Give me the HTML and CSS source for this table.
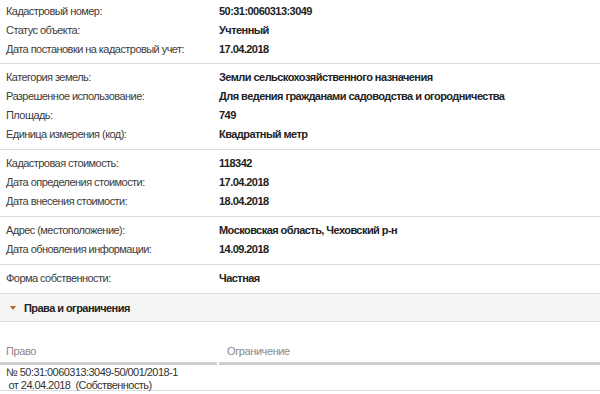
FILE: index.html
```html
<!DOCTYPE html>
<html lang="ru">
<head>
<meta charset="utf-8">
<title>Объект</title>
<link rel="stylesheet" href="styles.css">
</head>
<body>
<div class="info">
  <div class="section first">
    <div class="row"><span class="label">Кадастровый номер:</span><span class="value">50:31:0060313:3049</span></div>
    <div class="row"><span class="label">Статус объекта:</span><span class="value">Учтенный</span></div>
    <div class="row"><span class="label">Дата постановки на кадастровый учет:</span><span class="value">17.04.2018</span></div>
  </div>
  <div class="section">
    <div class="row"><span class="label">Категория земель:</span><span class="value">Земли сельскохозяйственного назначения</span></div>
    <div class="row"><span class="label">Разрешенное использование:</span><span class="value">Для ведения гражданами садоводства и огородничества</span></div>
    <div class="row"><span class="label">Площадь:</span><span class="value">749</span></div>
    <div class="row"><span class="label">Единица измерения (код):</span><span class="value">Квадратный метр</span></div>
  </div>
  <div class="section">
    <div class="row"><span class="label">Кадастровая стоимость:</span><span class="value">118342</span></div>
    <div class="row"><span class="label">Дата определения стоимости:</span><span class="value">17.04.2018</span></div>
    <div class="row"><span class="label">Дата внесения стоимости:</span><span class="value">18.04.2018</span></div>
  </div>
  <div class="section">
    <div class="row"><span class="label">Адрес (местоположение):</span><span class="value">Московская область, Чеховский р-н</span></div>
    <div class="row"><span class="label">Дата обновления информации:</span><span class="value">14.09.2018</span></div>
  </div>
  <div class="section">
    <div class="row"><span class="label">Форма собственности:</span><span class="value">Частная</span></div>
  </div>
  <div class="band">
    <span class="arrow"></span>
    <span class="band-title">Права и ограничения</span>
  </div>
  <div class="rights">
    <div class="th th-first">Право</div>
    <div class="th">Ограничение</div>
    <div class="td td-first">№ 50:31:0060313:3049-50/001/2018-1<br>&nbsp;от 24.04.2018 &nbsp;(Собственность)</div>
    <div class="td"></div>
  </div>
</div>
</body>
</html>
```
FILE: styles.css
```css
html, body {
  margin: 0;
  padding: 0;
  background: #ffffff;
}
body {
  font-family: "Liberation Sans", Arial, sans-serif;
  font-size: 11px;
  letter-spacing: -0.55px;
  color: #333333;
}
.info {
  width: 600px;
}
.section {
  padding: 4px 0 5px;
  border-bottom: 1px solid #dcdcdc;
}
.section.first {
  padding-top: 2px;
  padding-bottom: 4px;
}
.row {
  display: grid;
  grid-template-columns: 213px 1fr;
  height: 19px;
  line-height: 19px;
  padding-left: 6px;
  white-space: nowrap;
}
.label {
  color: #3c3c3c;
}
.value {
  font-weight: bold;
  color: #222222;
}
.band {
  display: flex;
  align-items: center;
  height: 27px;
  background: #f5f5f5;
  border-bottom: 1px solid #dcdcdc;
  padding-left: 10px;
}
.arrow {
  width: 0;
  height: 0;
  border-left: 3px solid transparent;
  border-right: 3px solid transparent;
  border-top: 4px solid #b5652a;
  margin-right: 8px;
  margin-top: 1px;
}
.band-title {
  font-weight: bold;
  color: #222222;
}
.rights {
  display: grid;
  grid-template-columns: 217px 1fr;
  column-gap: 2px;
  margin-top: 19px;
}
.th {
  height: 21px;
  line-height: 21px;
  color: #8a8a8a;
  letter-spacing: -0.4px;
  border-bottom: 3px solid #cfcfcf;
  padding-left: 8px;
}
.th-first {
  padding-left: 6px;
}
.td {
  line-height: 13px;
  padding: 1px 0 0 6px;
  height: 26px;
  border-bottom: 1px solid #dcdcdc;
  box-sizing: border-box;
  color: #333333;
  white-space: nowrap;
}
.rights .td:last-child {
  margin-left: -2px;
}
```
